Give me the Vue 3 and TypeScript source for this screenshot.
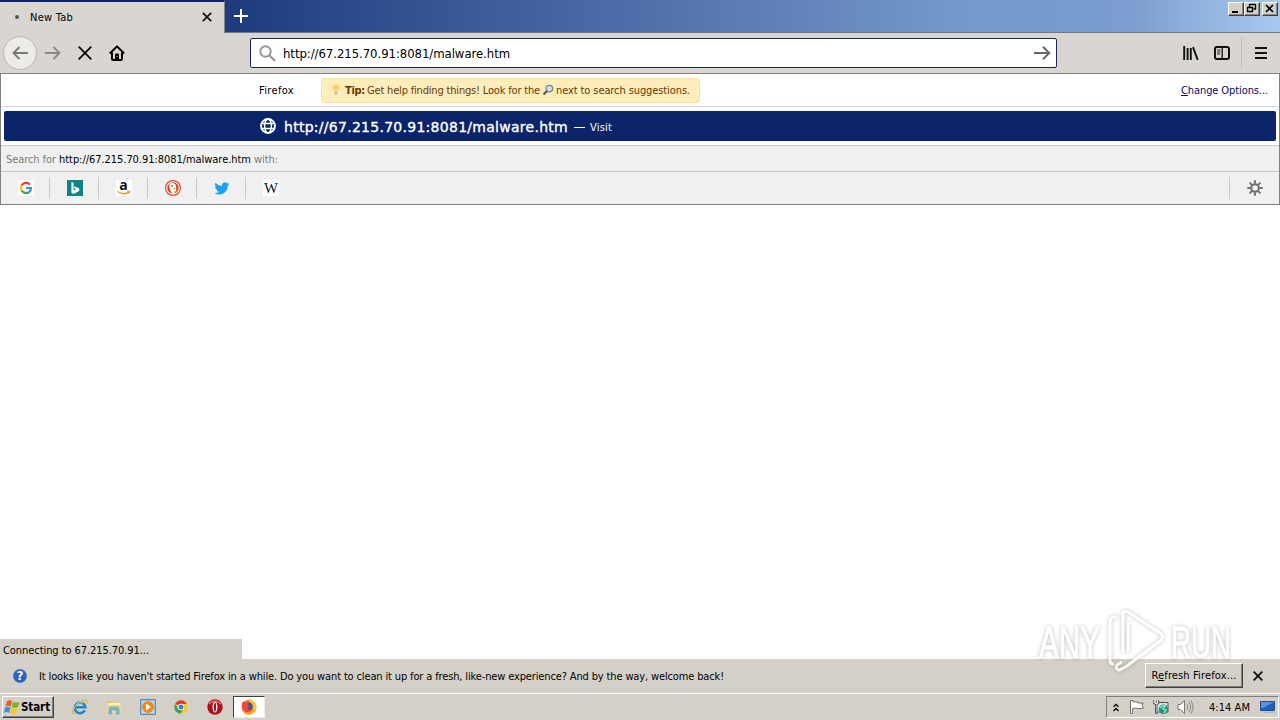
<script setup lang="ts">
import type { Directive } from 'vue'

interface Engine { id: string; name: string }

const url = 'http://67.215.70.91:8081/malware.htm'
const engines: Engine[] = [
  { id: 'google', name: 'Google' },
  { id: 'bing', name: 'Bing' },
  { id: 'amazon', name: 'Amazon' },
  { id: 'duck', name: 'DuckDuckGo' },
  { id: 'twitter', name: 'Twitter' },
  { id: 'wiki', name: 'Wikipedia' },
]
const launchers: string[] = ['ie', 'explorer', 'media', 'chrome', 'opera', 'firefox']

// Tracks a label out or in so that it takes the given width in pixels.
const vFit: Directive<HTMLElement, number> = {
  mounted(el, binding) {
    const count = (el.textContent ?? '').length
    const natural = el.getBoundingClientRect().width
    if (count > 0) el.style.letterSpacing = `${(binding.value - natural) / count}px`
  },
}
</script>

<template>
  <div class="screen">
    <header class="tabstrip">
      <div class="tab">
        <span class="busy"></span>
        <span class="tab-title"><span v-fit="43">New Tab</span></span>
        <svg class="tab-close" width="10" height="10" viewBox="0 0 10 10"><path d="M.8.8l8.4 8.4M9.2.8L.8 9.2" stroke="#111" stroke-width="1.7" /></svg>
      </div>
      <svg class="plus" width="14" height="14" viewBox="0 0 14 14"><path d="M7 0v14M0 7h14" stroke="#fff" stroke-width="2" /></svg>
      <div class="window-buttons">
        <span class="wb"><svg width="13" height="11" viewBox="0 0 13 11"><path d="M3 9h6" stroke="#000" stroke-width="2" /></svg></span>
        <span class="wb"><svg width="13" height="11" viewBox="0 0 13 11"><path d="M4.500 4V1.500h6v4.500h-2M4 1.500h7M2.500 4.500h5v4h-5zM2 4.500h6" fill="none" stroke="#000" stroke-width="1.300" /></svg></span>
        <span class="wb last"><svg width="13" height="11" viewBox="0 0 13 11"><path d="M3 2l7 7M10 2L3 9" stroke="#000" stroke-width="1.700" /></svg></span>
      </div>
    </header>

    <nav class="toolbar">
      <span class="back"><svg width="16" height="14" viewBox="0 0 16 14"><path d="M16 7H1.500M7.500 1l-6 6 6 6" fill="none" stroke="#777" stroke-width="1.900" /></svg></span>
      <svg class="forward" width="16" height="14" viewBox="0 0 16 14"><path d="M0 7h14.500M8.500 1l6 6-6 6" fill="none" stroke="#8b8984" stroke-width="1.900" /></svg>
      <svg class="stop" width="14" height="14" viewBox="0 0 14 14"><path d="M.7.7l12.600 12.600M13.300.7L.7 13.300" stroke="#0c0c0d" stroke-width="1.900" /></svg>
      <svg class="home" width="16" height="16" viewBox="0 0 16 16"><path d="M.8 8.500L8 1.400l7.200 7.100M3 7.500v6.400c0 .6.400 1.100 1.100 1.100h7.800c.7 0 1.100-.5 1.100-1.100V7.500" fill="none" stroke="#000" stroke-width="2" stroke-linejoin="round" /><path d="M6 15V9.500q0-1 1-1h2q1 0 1 1V15z" /><path d="M8 11v1" stroke="#ddd" /></svg>
      <div class="urlbar">
        <svg width="17" height="17" viewBox="0 0 17 17"><circle cx="6.500" cy="6.500" r="5.200" fill="none" stroke="#999" stroke-width="2" /><path d="M10.300 10.300l5.700 5.700" stroke="#999" stroke-width="2.200" /></svg>
        <span class="url-text"><span v-fit="227">{{ url }}</span></span>
        <svg class="go" width="17" height="14" viewBox="0 0 17 14"><path d="M0 7h15.500M9 .8L15.300 7 9 13.200" fill="none" stroke="#666" stroke-width="1.900" /></svg>
      </div>
      <svg class="library" width="16" height="15" viewBox="0 0 16 15"><path d="M1.200 0v14M4.600 2v12M7.800 2v12M10 1.200l4.700 12.600" stroke="#111" stroke-width="1.900" /></svg>
      <svg class="sidebar" width="16" height="14" viewBox="0 0 16 14"><rect x="1" y="1" width="14" height="12" rx="2" fill="none" stroke="#111" stroke-width="2" /><path d="M8.200 1v12" stroke="#111" stroke-width="1.300" /><path d="M3 4h3.500M3 6h3.500M3 8h3" stroke="#111" stroke-width=".9" /></svg>
      <span class="divider"></span>
      <svg class="menu" width="12" height="12" viewBox="0 0 12 12"><path d="M0 1h12M0 6h12M0 11h12" stroke="#111" stroke-width="2" /></svg>
    </nav>

    <section class="panel">
      <div class="tip-row">
        <span class="brand"><span v-fit="35">Firefox</span></span>
        <div class="tip">
          <svg width="12" height="14" viewBox="0 0 12 14"><circle cx="6" cy="5" r="3.800" fill="#ffdd83" /><circle cx="6" cy="4.500" r="2" fill="#ffc94d" /><path d="M4.500 8h3v4h-3z" fill="#ccc6ba" /></svg>
          <b><span v-fit="20">Tip:</span></b>
          <span class="tip-a"><span v-fit="173">Get help finding things! Look for the</span></span>
          <svg class="lens" width="12" height="12" viewBox="0 0 12 12"><circle cx="7.400" cy="4.600" r="3.300" fill="#c5e5f2" stroke="#71858e" stroke-width="1.200" /><path d="M5 7L1.500 10.500" stroke="#59544f" stroke-width="2.200" /></svg>
          <span class="tip-b"><span v-fit="134">next to search suggestions.</span></span>
        </div>
        <a class="change"><span v-fit="87"><u>C</u>hange Options...</span></a>
      </div>
      <div class="result">
        <svg width="16" height="16" viewBox="0 0 16 16"><g fill="none" stroke="#fff" stroke-width="1.500"><circle cx="8" cy="8" r="7" stroke-width="1.900" /><ellipse cx="8" cy="8" rx="3.400" ry="7" /><path d="M1.500 5.500h13M1.500 10.500h13" /></g></svg>
        <span class="result-url"><span v-fit="284">{{ url }}</span></span>
        <span class="dash"></span>
        <span class="visit"><span v-fit="22">Visit</span></span>
      </div>
      <div class="search-with">
        <span v-fit="53">Search for&nbsp;</span><span class="query" v-fit="195">{{ url }}&nbsp;</span><span v-fit="24">with:</span>
      </div>
      <div class="engines">
        <span v-for="e in engines" :key="e.id" class="engine" :aria-label="e.name">
          <svg v-if="e.id === 'google'" width="16" height="16" viewBox="0 0 16 16"><path fill="#fff" d="M0 0h16v16H0z" /><g fill="none" stroke-width="2.200"><path d="M12 4.700A5 5 0 0 0 3.600 5.600" stroke="#ea4335" /><path d="M3.600 5.500a5 5 0 0 0 0 5" stroke="#fbbc05" /><path d="M3.600 10.400a5 5 0 0 0 7.700 1.400" stroke="#34a853" /><path d="M11.200 11.900A5 5 0 0 0 13 8H8" stroke="#4285f4" /></g></svg>
          <svg v-else-if="e.id === 'bing'" width="16" height="16" viewBox="0 0 16 16"><path fill="#0a8484" d="M0 0h16v16H0z" /><path fill="#fff" d="M4.400 2l2.200.8v7.700L9 9.200 7.700 8.600 6.800 6.300l5.400 2v2.700L6.600 14l-2.200-1.300z" /></svg>
          <svg v-else-if="e.id === 'amazon'" width="16" height="16" viewBox="0 0 16 16"><path fill="#fff" d="M0 0h16v16H0z" /><text x="3.300" y="10" class="glyph-a">a</text><path d="M1.500 11.500q6 4 11.500.7" fill="none" stroke="#f7981d" stroke-width="1.500" /><path d="M11 11.400l3-.2-.8 2.600" fill="none" stroke="#f7981d" /></svg>
          <svg v-else-if="e.id === 'duck'" width="16" height="16" viewBox="0 0 16 16"><circle cx="8" cy="8" r="8" fill="#d9482a" /><circle cx="8" cy="8" r="6.300" fill="#d9482a" stroke="#fff" stroke-width="1.100" /><path d="M4.300 5c1.500-3 6-2.500 6.700 1 .2 2.300-.2 4.800.8 7-1.300.9-3.500 1-4.800.4C5.700 11 4.300 8.500 4.300 5z" fill="#fff" /><circle cx="7" cy="5.900" r=".8" fill="#344b6b" /><path d="M7.500 8.600l4.500-.8-1 1.500-3 .4z" fill="#fdbd22" /><path d="M8 12l3.500-1v2.300z" fill="#4ba845" /></svg>
          <svg v-else-if="e.id === 'twitter'" width="16" height="16" viewBox="0 0 24 24"><path fill="#1da1f2" d="M23 5.500c-.8.400-1.700.6-2.600.7.900-.6 1.600-1.400 2-2.500-.9.500-1.900.9-2.900 1.100a4.600 4.600 0 0 0-7.800 4.200A13 13 0 0 1 2.300 4.200a4.600 4.600 0 0 0 1.400 6.100c-.7 0-1.400-.2-2-.6 0 2.300 1.500 4.100 3.600 4.600-.7.200-1.400.2-2 .1a4.600 4.600 0 0 0 4.200 3.200A9.200 9.200 0 0 1 .7 19.500C10 25.200 20.900 19.500 20.700 8c.9-.7 1.700-1.500 2.300-2.500z" /></svg>
          <svg v-else width="16" height="16" viewBox="0 0 16 16"><path fill="#fff" d="M0 0h16v16H0z" /><text x="8" y="13" text-anchor="middle" textLength="14" lengthAdjust="spacingAndGlyphs" class="glyph-w">W</text></svg>
        </span>
        <span class="settings"><svg width="16" height="16" viewBox="0 0 16 16"><circle cx="8" cy="8" r="3.800" fill="none" stroke="#6d6d6d" stroke-width="2" /><path d="M8 .3v3.200M8 12.500v3.200M.3 8h3.200M12.500 8h3.200M2.600 2.600l2.200 2.200M11.200 11.200l2.200 2.200M2.600 13.400l2.200-2.200M11.200 4.800l2.200-2.200" stroke="#6d6d6d" stroke-width="1.900" /></svg></span>
      </div>
    </section>

    <main class="page">
      <div class="status"><span v-fit="146">Connecting to 67.215.70.91...</span></div>
      <svg class="watermark" width="210" height="76" viewBox="0 0 210 76">
        <g class="mark">
          <text x="9" y="52" textLength="61" lengthAdjust="spacingAndGlyphs">ANY</text>
          <text x="141" y="52" textLength="60" lengthAdjust="spacingAndGlyphs">RUN</text>
          <path d="M87 11q-7-1-7 5v39q0 3 4 3M93 46V9q0-5 5-3l32 21q5 4 0 8L97 60q-5 3-8 4-4-1-2-5l5-3M98 16v30" />
        </g>
      </svg>
    </main>

    <aside class="notice">
      <svg class="help" width="16" height="16" viewBox="0 0 16 16"><circle cx="8" cy="8" r="7.400" fill="#2c62bd" stroke="#e3ecf7" /><circle cx="8" cy="8" r="6.900" fill="none" stroke="#7595c7" stroke-width=".8" /><text x="8" y="12.200" text-anchor="middle" class="help-q">?</text></svg>
      <span class="notice-text"><span v-fit="685">It looks like you haven't started Firefox in a while. Do you want to clean it up for a fresh, like-new experience? And by the way, welcome back!</span></span>
      <button class="refresh"><span v-fit="85">R<u>e</u>fresh Firefox...</span></button>
      <svg class="notice-close" width="10" height="10" viewBox="0 0 10 10"><path d="M.7.7l8.600 8.600M9.300.7L.7 9.300" stroke="#111" stroke-width="1.900" /></svg>
    </aside>

    <footer class="taskbar">
      <div class="start">
        <svg width="16" height="16" viewBox="0 0 16 16"><path d="M3 2q3-1.500 5.200.2L6.800 7.600Q4.200 6 1.500 7.400z" fill="#e8602c" /><path d="M9 2.700q3 1.700 6.500 0L14 8q-3.400 1.600-6.300-.1z" fill="#76b82a" /><path d="M1.200 8.500q2.700-1.500 5.300.1L5 14q-2.400-1.600-5-.3z" fill="#3a8ee0" /><path d="M7.400 9q3 1.600 6.300 0L12.200 14.400q-3.200 1.700-6.200-.1z" fill="#ffc527" /></svg>
        <b><span v-fit="29">Start</span></b>
      </div>
      <div class="launchers">
        <span v-for="l in launchers" :key="l" class="launcher" :class="{ active: l === 'firefox' }">
          <svg v-if="l === 'ie'" width="16" height="16" viewBox="0 0 16 16"><path d="M12.800 11.200a5.300 5.300 0 1 1 .5-3H4" fill="none" stroke="#1e84d4" stroke-width="2.600" /><path d="M2.400 14.500C-1 15 1 9.500 5 5.500S14-.2 15 1.500q.5 1-.5 3" fill="none" stroke="#e7b52c" stroke-width="1.300" /><path d="M4 6q3-4 7-2" stroke="#8fd4f7" fill="none" /></svg>
          <svg v-else-if="l === 'explorer'" width="16" height="16" viewBox="0 0 16 16"><path d="M1 2h5l1 1.500h7V13H1z" fill="#e9c65a" /><path d="M2 4h12v8H2z" fill="#fff4b9" /><path d="M1 6h14v7.500H1z" fill="#f4d878" /><path d="M3 15v-5q0-2 2-2h6q2 0 2 2v5h-2.500v-4h-5v4z" fill="#70b9e3" stroke="#4e99c9" stroke-width=".5" /></svg>
          <svg v-else-if="l === 'media'" width="16" height="16" viewBox="0 0 16 16"><path d="M.5.5h15v15H.5z" fill="#92bde7" stroke="#568dc1" /><path d="M2 2h12v12H2z" fill="#c5ddf2" /><circle cx="8" cy="8" r="6" fill="#f58a12" /><path d="M6 4.500l5 3.500-5 3.500z" fill="#fff" /></svg>
          <svg v-else-if="l === 'chrome'" width="16" height="16" viewBox="0 0 16 16"><circle cx="8" cy="8" r="6.700" fill="#f8ca20" /><path d="M8 8L2.200 4.700A6.700 6.700 0 0 1 13.800 4.700L8 5z" fill="#e33b2e" /><path d="M8 8l-3 1.500-2.800-4.800A6.700 6.700 0 0 0 7.500 14.700L10.600 9.500z" fill="#3fa354" /><circle cx="8" cy="8" r="3.300" fill="#fff" /><circle cx="8" cy="8" r="2.500" fill="#3f7ddd" /></svg>
          <svg v-else-if="l === 'opera'" width="16" height="16" viewBox="0 0 16 16"><circle cx="8" cy="8" r="7.700" fill="#b50d17" /><path d="M2 5q6-6 12 0" fill="none" stroke="#ed6969" stroke-width="1.500" /><ellipse cx="8" cy="8" rx="2.500" ry="5.500" fill="#eee" /><ellipse cx="8" cy="8" rx="1" ry="4.500" fill="#871019" /></svg>
          <svg v-else width="16" height="16" viewBox="0 0 16 16"><circle cx="8" cy="8.200" r="7.400" fill="#ff7a1c" /><path d="M8 0q6 1.500 7.400 7Q15 15 8 15.700 13 12 11 7 8 5 8 0z" fill="#ffc721" /><circle cx="7.500" cy="7.500" r="4.300" fill="#2f55b5" /><path d="M1 4l2-2 1 2q2-1 4 0L6.500 6q1 1 2.500 1 0 1.500-3 2 2 3 6 1-3 5-8 3Q0 9 1 4z" fill="#f5443b" /><path d="M2 11q5 5 11-1-2 6-7 5.500Q3 14 2 11z" fill="#ff9b20" /></svg>
        </span>
      </div>
      <div class="tray">
        <svg class="chev" width="6" height="9" viewBox="0 0 6 9"><path d="M.5 3.800L3 1.300l2.500 2.500M.5 8L3 5.500 5.500 8" fill="none" stroke="#000" stroke-width="1.300" /></svg>
        <svg class="flag" width="16" height="16" viewBox="0 0 16 16"><path d="M1.500 1.500v13h2v-5q3-1 5 0 2 .8 6-.5l-1.500-2.500 1-2.500q-3 .8-5-.5-2-1-5-.5V1.500z" fill="#fff" stroke="#6d6d6d" /></svg>
        <svg class="net" width="16" height="16" viewBox="0 0 16 16"><path d="M3.500 3.500h11.500v9.500h-11.500z" fill="#d6e6ea" stroke="#555" /><path d="M.8 1v4h1.700v9.500H4V5h1.700V1" fill="#fff" stroke="#555" /><path d="M3.200 1v3" stroke="#555" /><circle cx="10.500" cy="10.300" r="4.800" fill="#25918c" /><path d="M7 9q3-3 5-2l-2 3 3 1-2 3" fill="none" stroke="#8ce3ac" stroke-width="1.400" /></svg>
        <svg class="sound" width="17" height="16" viewBox="0 0 17 16"><path d="M1 5.500h2.500L7.500 1.500v13l-4-4H1z" fill="#fff" stroke="#777" /><path d="M10 5q2 3 0 6M12 3q3.500 5 0 10M14 1.500q4 6.500 0 13" fill="none" stroke="#888" /></svg>
        <span class="clock"><span v-fit="41">4:14 AM</span></span>
        <svg class="desktop" width="15" height="14" viewBox="0 0 15 14"><path d="M.5 1.500h14v9H.5z" fill="#225dbc" stroke="#254e89" /><path d="M1 2h13L3 8H1z" fill="#5792df" /><path d="M1 11.500h13v1.500H4z" fill="#9fb9d9" /></svg>
      </div>
    </footer>
  </div>
</template>

<style>
html, body { margin: 0; overflow: hidden; background: #fff; }
</style>

<style scoped>
* { box-sizing: border-box; }
svg { display: block; flex: none; overflow: visible; }
.screen { width: 1280px; height: 720px; display: flex; flex-direction: column; background: #fff; color: #000; font: 11px/14px "DejaVu Sans Condensed", "DejaVu Sans", sans-serif; white-space: nowrap; }
.tabstrip { height: 33px; flex: none; display: flex; background: linear-gradient(90deg, #0a246a 0, #1e3b7f 18%, #4563a0 43%, #7599cb 75%, #7b9dcf 88%, #a6caf0 100%); border-bottom: 1px solid #76767c; }
.tab { width: 225px; height: 33px; background: #d9d6d1; border-top: 2px solid #0a246a; border-right: 1px solid #888; display: flex; align-items: center; padding: 0 0 1px 15px; }
.busy { width: 4px; height: 4px; border-radius: 50%; background: #555; margin-right: 11px; }
.tab-title { width: 171px; padding-top: 2px; }
.tab-close { margin-left: 1px; }
.plus { margin: 9px 0 0 9px; }
.window-buttons { display: flex; margin: 2px 2px 0 auto; height: 14px; }
.wb { width: 16px; height: 14px; background: #d4d0c8; border: 1px solid; border-color: #fff #404040 #404040 #fff; box-shadow: inset -1px -1px #888; overflow: hidden; }
.wb.last { margin-left: 2px; }
.toolbar { height: 40px; flex: none; background: #d9d6d1; display: flex; align-items: center; padding-left: 3px; }
.back { width: 34px; height: 34px; border: 1px solid #bab7b1; border-radius: 50%; background: #edebe8; display: flex; align-items: center; justify-content: center; }
.forward { margin-left: 8px; }
.stop { margin-left: 17px; }
.home { margin-left: 17px; }
.urlbar { width: 807px; height: 30px; margin-left: 125px; background: #fff; border: 1px solid #162960; border-radius: 2px; display: flex; align-items: center; padding-left: 8px; }
.url-text { font-size: 13px; margin-left: 7px; padding-top: 2px; }
.go { margin: 0 5px 0 auto; }
.library { margin-left: 126px; }
.sidebar { margin-left: 15px; }
.divider { width: 1px; height: 32px; background: #c3c0bb; margin-left: 11px; }
.menu { margin-left: 13px; }
.panel { height: 132px; flex: none; border: 1px solid #808080; background: #fff; display: flex; flex-direction: column; }
.tip-row { height: 33px; border-bottom: 1px solid #d4d3c7; display: flex; align-items: center; padding-left: 258px; }
.brand { width: 62px; padding-top: 2px; }
.tip { width: 379px; height: 25px; border: 1px solid #ffe08a; border-radius: 3px; background: #ffedbc; color: #6b3700; display: flex; align-items: center; padding-left: 8px; }
.tip b { margin-left: 3px; width: 22px; padding-top: 2px; }
.tip-a { width: 175px; padding-top: 2px; }
.tip-b { margin-left: 2px; padding-top: 2px; }
.change { margin-left: auto; padding: 1px 11px 0 0; color: #0b0b68; }
.result { margin: 4px 3px; height: 30px; flex: none; background: #0a246a; border-radius: 2px; display: flex; align-items: center; color: #fff; padding-left: 256px; }
.result-url { margin-left: 8px; padding-top: 2px; font: 14px/20px "DejaVu Sans", sans-serif; -webkit-text-stroke: .35px #fff; }
.dash { width: 11px; height: 1px; background: #fff; margin: 3px 5px 0 6px; }
.visit { padding-top: 3px; }
.search-with { height: 27px; border-top: 1px solid #c6c6c6; border-bottom: 1px solid #c6c6c6; background: #f0f0f0; color: #7b7b7b; display: flex; align-items: center; padding: 2px 0 0 5px; }
.query { color: #000; }
.engines { flex: 1; background: #f0f0f0; display: flex; align-items: center; }
.engine { width: 49px; height: 22px; border-right: 1px solid #c8c8c8; display: flex; align-items: center; justify-content: center; padding-left: 2px; }
.engine:nth-child(6) { border-right-color: transparent; }
.settings { width: 50px; height: 22px; margin-left: auto; border-left: 1px solid #c8c8c8; display: flex; align-items: center; padding-left: 17px; }
.glyph-a { font: bold 14px "Open Sans", sans-serif; fill: #151515; }
.glyph-w { font: 15px "Liberation Serif", serif; fill: #111; }
.page { flex: 1; position: relative; }
.status { position: absolute; left: 0; bottom: 0; width: 242px; height: 20px; background: #d4d0c8; padding: 5px 0 0 3px; }
.watermark { position: absolute; right: 40px; bottom: -23px; z-index: 2; }
.mark { filter: drop-shadow(0 0 2px rgb(0 0 0 / .3)); fill: none; stroke: #fff; stroke-width: 3; opacity: .85; }
.mark text { font: 45px "Liberation Sans", sans-serif; fill: #fff; stroke-width: .8; }
.notice { height: 34px; flex: none; background: #d4d0c8; display: flex; align-items: center; padding-left: 12px; }
.notice-text { margin-left: 11px; padding-top: 2px; }
.help-q { font: bold 12px "DejaVu Sans", sans-serif; fill: #fff; }
.refresh { position: relative; z-index: 3; margin: 0 0 1px auto; width: 98px; height: 25px; padding: 1px 0 0; background: #d4d0c8; color: #000; font: inherit; border: 1px solid; border-color: #fff #404040 #404040 #fff; box-shadow: inset -1px -1px #808080; }
.notice-close { margin: 0 17px 0 10px; }
.taskbar { height: 27px; flex: none; border-top: 1px solid #fff; background: #d4d0c8; display: flex; align-items: center; }
.start { width: 52px; height: 22px; margin-left: 2px; display: flex; align-items: center; padding-left: 1px; border: 1px solid; border-color: #fff #404040 #404040 #fff; box-shadow: inset -1px -1px #808080; font-size: 11.500px; }
.start b { padding-left: 1px; }
.launchers { display: flex; margin-left: 10px; }
.launcher { width: 32px; height: 22px; margin-right: 1.8px; display: flex; align-items: center; justify-content: center; }
.launcher.active { background: #fff; border: 1px solid; border-color: #404040 #eee #eee #404040; }
.tray { width: 173px; height: 22px; margin: 0 1px 0 auto; display: flex; align-items: center; padding-left: 6px; border: 1px solid; border-color: #808080 #fff #fff #808080; }
.flag { margin-left: 10px; }
.net { margin-left: 8px; }
.sound { margin-left: 8px; }
.clock { width: 51px; margin-left: 15px; padding-top: 1px; }
</style>
